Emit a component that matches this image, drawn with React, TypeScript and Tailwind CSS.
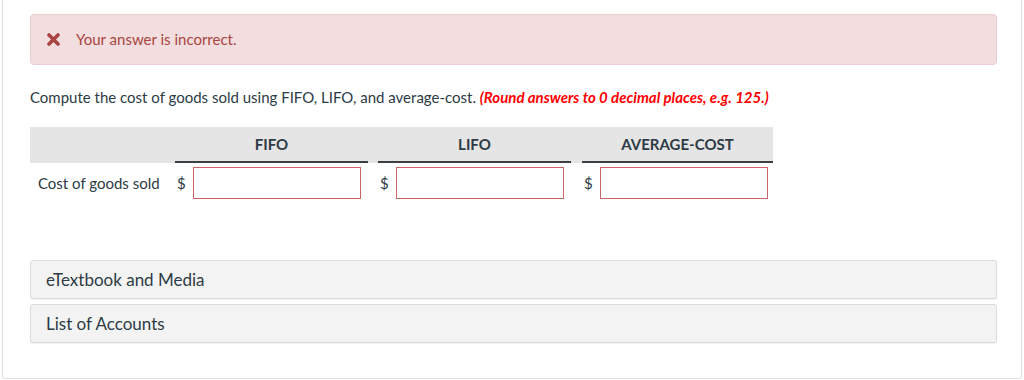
import React from 'react';

const columns = [
    { label: 'FIFO', cell: 'w-[203px] pr-[10px]' },
    { label: 'LIFO', cell: 'w-[204px] pr-[11px]' },
    { label: 'AVERAGE-COST', cell: 'w-[191px]' },
];

function CrossIcon() {
    return (
        <svg width="13" height="13" viewBox="0 0 13 13" className="shrink-0">
            <path d="M2 2 L11 11 M11 2 L2 11" stroke="#a94442" strokeWidth="3.6" strokeLinecap="round" />
        </svg>
    );
}

export default function App() {
    return (
        <div className="bg-white w-[1024px] h-[380px] overflow-hidden" style={{ fontFamily: 'Lato, "Open Sans", sans-serif' }}>
            <div className="ml-[2px] w-[1020px] h-[379px] border-l border-r border-b border-[#e0e0e0] rounded-b-[3px] pl-[27px] pr-[24px] pt-[14px]">
                {/* feedback */}
                <div className="h-[51px] flex items-center gap-[16px] pl-[16px] bg-[#f2dede] border border-[#ebccd1] rounded-[4px] text-[15px] text-[#a94442]">
                    <CrossIcon />
                    <span>Your answer is incorrect.</span>
                </div>

                <p className="mt-[23px] text-[15px] leading-[19px] text-[#2d3b45]">
                    Compute the cost of goods sold using FIFO, LIFO, and average-cost.{' '}
                    <span className="font-bold italic text-[#ff0000]">(Round answers to 0 decimal places, e.g. 125.)</span>
                </p>

                {/* answer table */}
                <div className="mt-[20px] w-[743px]">
                    <div className="flex h-[36px] bg-[#e5e5e5]">
                        <div className="w-[145px]" />
                        {columns.map((c) => (
                            <div key={c.label} className={c.cell}>
                                <div className="h-full flex items-center justify-center border-b-2 border-[#3a3f44] text-[15px] font-bold text-[#2d3b45]">
                                    {c.label}
                                </div>
                            </div>
                        ))}
                    </div>
                    <div className="flex items-center pt-[4px]">
                        <div className="w-[145px] pl-[8px] text-[15px] text-[#2d3b45]">Cost of goods sold</div>
                        {columns.map((c) => (
                            <div key={c.label} className={`flex items-center ${c.cell}`}>
                                <span className="w-[18px] pl-[2px] text-[15px] text-[#2d3b45]">$</span>
                                <input className="w-[168px] h-[32px] border border-[#c96565] bg-white outline-none" />
                            </div>
                        ))}
                    </div>
                </div>

                {/* resources */}
                <div className="mt-[61px] flex flex-col gap-[5px]">
                    <div className="h-[39px] flex items-center px-[15px] bg-[#f3f3f3] border border-[#dcdcdc] rounded-[3px] shadow-[0_1px_1px_rgba(0,0,0,0.06)] text-[17px] text-[#2d3b45]">
                        eTextbook and Media
                    </div>
                    <div className="h-[39px] flex items-center px-[15px] bg-[#f3f3f3] border border-[#dcdcdc] rounded-[3px] shadow-[0_1px_1px_rgba(0,0,0,0.06)] text-[17px] text-[#2d3b45]">
                        List of Accounts
                    </div>
                </div>
            </div>
        </div>
    );
}
